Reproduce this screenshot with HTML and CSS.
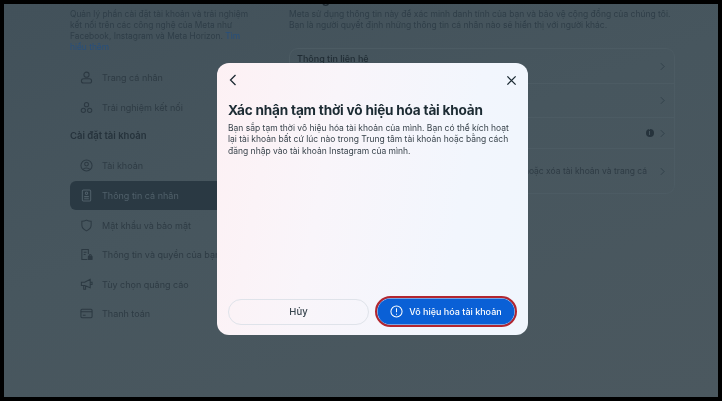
FILE: index.html
```html
<!DOCTYPE html>
<html lang="vi">
<head>
<meta charset="utf-8">
<title>Xác nhận tạm thời vô hiệu hóa tài khoản</title>
<link rel="stylesheet" href="styles.css">
</head>
<body>
<div class="screen">
  <div class="app">
    <aside class="sidebar">
      <p class="intro">Quản lý phần cài đặt tài khoản và trải nghiệm kết nối trên các công nghệ của Meta như Facebook, Instagram và Meta Horizon. <span class="link">Tìm hiểu thêm</span></p>
      <nav class="nav nav-first">
        <div class="nav-row"><svg class="nav-icon" viewBox="0 0 14 14"><circle cx="7" cy="4" r="2.8"/><rect x="1.5" y="8.4" width="11" height="4.6" rx="2.3"/></svg><span>Trang cá nhân</span></div>
        <div class="nav-row"><svg class="nav-icon" viewBox="0 0 14 14"><circle cx="7" cy="4" r="2.3"/><circle cx="3.6" cy="10" r="2.3"/><circle cx="10.4" cy="10" r="2.3"/></svg><span>Trải nghiệm kết nối</span></div>
      </nav>
      <h2 class="nav-title">Cài đặt tài khoản</h2>
      <nav class="nav">
        <div class="nav-row"><svg class="nav-icon" viewBox="0 0 14 14"><circle cx="7" cy="7" r="6"/><circle cx="7" cy="5.5" r="2"/><path d="M3.4 11.2c.8-2 5.800-2 7.200 0"/></svg><span>Tài khoản</span></div>
        <div class="nav-row active"><svg class="nav-icon" viewBox="0 0 14 14"><rect x="2.5" y="1" width="9" height="12" rx="1.2"/><circle cx="7" cy="4.600" r="1.300"/><path d="M4.500 8.200h5M4.500 10.600h5"/></svg><span>Thông tin cá nhân</span></div>
        <div class="nav-row"><svg class="nav-icon" viewBox="0 0 14 14"><path d="M7 1.200c1.800 1 3.400 1.300 5 1.300v4c0 3-2 5-5 6.300-3-1.300-5-3.300-5-6.300v-4c1.600 0 3.200-.3 5-1.300z"/></svg><span>Mật khẩu và bảo mật</span></div>
        <div class="nav-row"><svg class="nav-icon" viewBox="0 0 14 14"><path d="M8 12.500H2V1.500h7v5M4 4.500h3M4 7h2"/><rect x="9" y="9" width="4" height="3.500" rx=".5" class="solid"/><path d="M9.900 9V8a1.100 1.100 0 0 1 2.200 0v1"/></svg><span>Thông tin và quyền của bạn</span></div>
        <div class="nav-row"><svg class="nav-icon" viewBox="0 0 14 14"><path d="M5 4.500L11 1.500v9L5 8H1.500V4.500zM4 8.200V12h2V8.500M11 4.500h2v2.500h-2"/></svg><span>Tùy chọn quảng cáo</span></div>
        <div class="nav-row"><svg class="nav-icon" viewBox="0 0 14 14"><rect x="1" y="2.500" width="12" height="9" rx="1.200"/><path d="M1 5.200h12M3 9h3"/></svg><span>Thanh toán</span></div>
      </nav>
    </aside>
    <main class="content">
      <h2 class="page-title">Thông tin cá nhân</h2>
      <p class="lead">Meta sử dụng thông tin này để xác minh danh tính của bạn và bảo vệ cộng đồng của chúng tôi.<br>Bạn là người quyết định những thông tin cá nhân nào sẽ hiển thị với người khác.</p>
      <section class="card">
        <div class="card-row row-a"><span class="row-label">Thông tin liên hệ</span><svg class="chev" viewBox="0 0 6 10"><path d="M1 1l4 4-4 4"/></svg></div>
        <div class="card-row row-b"><span class="row-label">Ngày sinh</span><svg class="chev" viewBox="0 0 6 10"><path d="M1 1l4 4-4 4"/></svg></div>
        <div class="card-row row-c"><span class="row-label">Xác nhận danh tính</span><span class="info">i</span><svg class="chev" viewBox="0 0 6 10"><path d="M1 1l4 4-4 4"/></svg></div>
        <div class="card-row row-d"><span class="row-text">Quyền sở hữu và kiểm soát tài khoản: vô hiệu hóa hoặc xóa tài khoản và trang cá</span><svg class="chev" viewBox="0 0 6 10"><path d="M1 1l4 4-4 4"/></svg></div>
      </section>
    </main>
  </div>
  <div class="modal" role="dialog" aria-modal="true">
    <header class="modal-head">
      <svg class="back" viewBox="0 0 8 12"><path d="M6.500 1L1.500 6l5 5"/></svg>
      <svg class="close" viewBox="0 0 12 12"><path d="M1.500 1.500l9 9M10.500 1.500l-9 9"/></svg>
    </header>
    <h1 class="modal-title">Xác nhận tạm thời vô hiệu hóa tài khoản</h1>
    <p class="modal-text">Bạn sắp tạm thời vô hiệu hóa tài khoản của mình. Bạn có thể kích hoạt lại tài khoản bất cứ lúc nào trong Trung tâm tài khoản hoặc bằng cách đăng nhập vào tài khoản Instagram của mình.</p>
    <footer class="modal-foot">
      <button class="btn btn-cancel">Hủy</button>
      <button class="btn btn-primary"><svg class="alert" viewBox="0 0 14 14"><circle cx="7" cy="7" r="6"/><path d="M7 3.500v4.300M7 9.500v1"/></svg>Vô hiệu hóa tài khoản</button>
    </footer>
  </div>
</div>
</body>
</html>
```
FILE: styles.css
```css
* { box-sizing: border-box; }
html, body { margin: 0; height: 100%; background: #000; overflow: hidden; }
body { font-family: Inter, "Noto Sans", "Liberation Sans", sans-serif; }
.screen { position: relative; width: 722px; height: 401px; padding: 4px; }
.app {
  display: flex;
  height: 393px;
  width: 714px;
  overflow: hidden;
  padding-left: 66px;
  background: linear-gradient(160deg, #42515a 0%, #47565e 45%, #4b585f 100%);
  color: #2e3b44;
  font-size: 8.500px;
  filter: blur(.7px);
}
.sidebar { width: 181px; flex: none; }
.intro { margin: 5px 0 0; width: 181px; font-size: 8.400px; line-height: 11px; color: #2f3e48; }
.link { color: #274f7c; }
.nav { display: flex; flex-direction: column; }
.nav-first { margin-top: 10px; }
.nav-row {
  display: flex;
  align-items: center;
  gap: 9px;
  height: 29.600px;
  padding-left: 10px;
  white-space: nowrap;
  border-radius: 6px;
  font-size: 9px;
  color: #2e3b44;
}
.nav-row.active { width: 240px; background: #2a3943; color: #50606a; }
.active .nav-icon { stroke: #50606a; }
.nav-icon { width: 13px; height: 13px; flex: none; fill: none; stroke: #2c3942; stroke-width: 1.100; }
.nav-icon .solid { fill: #2c3942; }
.nav-title { margin: 8px 0 9px; font-size: 9.500px; line-height: 12px; font-weight: 600; color: #26333c; }
.content { width: 398px; margin-left: 38px; flex: none; }
.page-title { margin: -13px 0 0; height: 14px; font-size: 13px; line-height: 14px; font-weight: 700; color: #1f2b33; white-space: nowrap; }
.lead { margin: 4px 0 0; line-height: 11px; white-space: nowrap; color: #2f3e48; }
.card {
  margin-top: 17px;
  width: 386px;
  height: 146px;
  border: 1px solid #4c5b63;
  border-radius: 9px;
  display: flex;
  flex-direction: column;
}
.card-row { display: flex; align-items: center; padding: 0 9.500px 0 7px; border-bottom: 1px solid #4c5b63; }
.row-a { height: 35px; align-items: flex-start; padding-top: 4px; }
.row-b { height: 34px; }
.row-c { height: 31px; }
.row-d { flex: 1; border-bottom: 0; }
.row-a .chev { margin-top: 9px; }
.row-label { font-size: 9px; font-weight: 500; color: #1f2b33; flex: 1; }
.row-text { flex: 1; font-size: 8.500px; text-align: right; padding-right: 12.500px; white-space: nowrap; overflow: hidden; margin-top: -1px; }
.info {
  width: 8px; height: 8px; margin-right: 6px; border-radius: 50%;
  background: #26333c; color: #4a5a62; font-size: 6px; line-height: 8px; text-align: center; font-weight: 700;
}
.chev { width: 5px; height: 9px; flex: none; fill: none; stroke: #2f3e48; stroke-width: 1; }

.modal {
  position: absolute;
  left: 217px;
  top: 63px;
  width: 311px;
  height: 272px;
  display: flex;
  flex-direction: column;
  padding: 0 11px 8px;
  border-radius: 12px;
  background: linear-gradient(100deg, #fdf1f4 0%, #f9f5fa 35%, #f2f6fd 75%, #f0f6fd 100%);
  color: #1c2b33;
  filter: blur(.3px);
}
.modal-head { display: flex; justify-content: space-between; align-items: center; height: 34px; flex: none; padding: 0 0 0 1px; }
.back { width: 8px; height: 12px; fill: none; stroke: #1c2b33; stroke-width: 1.300; }
.close { width: 11px; height: 11px; fill: none; stroke: #1c2b33; stroke-width: 1.400; }
.modal-title { margin: 4px 0 0; font-size: 13.600px; letter-spacing: -.2px; line-height: 18px; font-weight: 700; white-space: nowrap; }
.modal-text { margin: 4px 0 0; font-size: 8.500px; line-height: 11.300px; color: #39444c; }
.modal-foot { margin-top: auto; display: flex; align-items: center; justify-content: space-between; }
.btn { font-family: inherit; font-size: 9.500px; border-radius: 16px; display: flex; align-items: center; justify-content: center; padding: 0; }
.btn-cancel { width: 141px; height: 26px; background: transparent; border: 1px solid #dfe3ea; color: #3a4750; font-weight: 500; }
.btn-primary {
  width: 142px;
  height: 31px;
  gap: 6px;
  font-size: 9px;
  background: #0a60d6;
  color: #fff;
  border: 2px solid #b3262f;
  font-weight: 500;
  box-shadow: inset 0 0 0 .5px #dfe8f5;
}
.alert { width: 13px; height: 13px; fill: none; stroke: #fff; stroke-width: 1.100; }
```
